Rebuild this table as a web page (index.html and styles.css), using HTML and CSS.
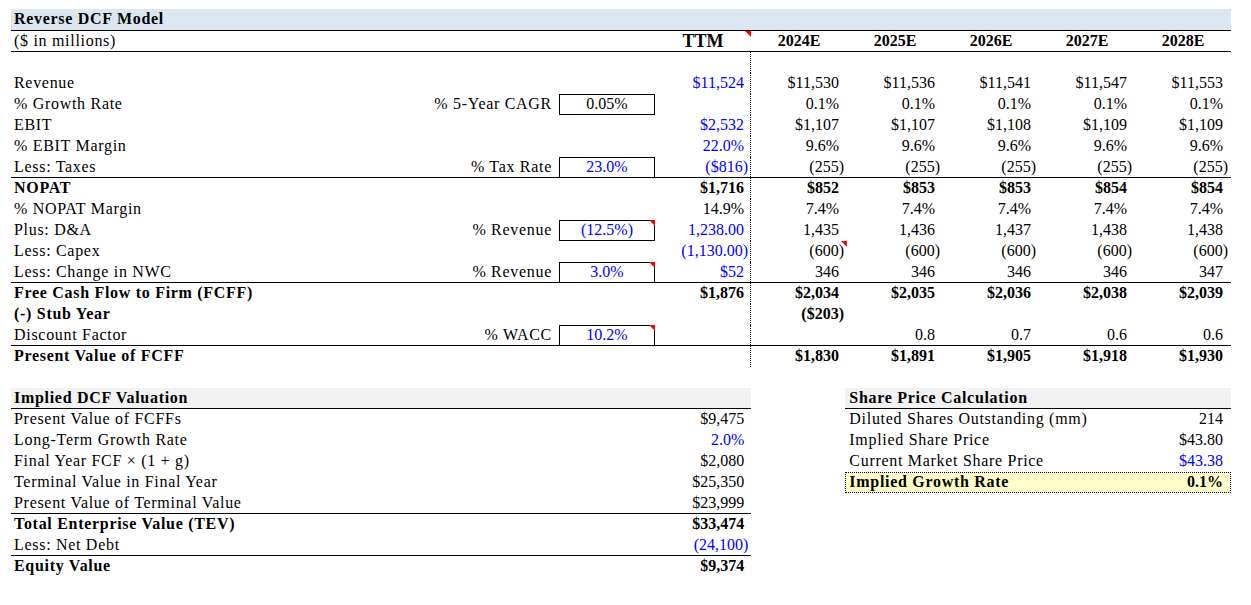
FILE: index.html
```html
<!DOCTYPE html>
<html>
<head>
<meta charset="utf-8">
<title>Reverse DCF Model</title>
<link rel="stylesheet" href="styles.css">
</head>
<body>
<div class="sheet">
  <div class="title">Reverse DCF Model</div>

  <div class="row bb">
    <div class="lbl">($ in millions)</div><div></div><div></div>
    <div class="hd ttmh">TTM<span class="tri"></span></div>
    <div class="hd">2024E</div><div class="hd">2025E</div><div class="hd">2026E</div><div class="hd">2027E</div><div class="hd">2028E</div>
  </div>

  <div class="row">
    <div class="lbl"></div><div></div><div></div><div class="ttm"></div>
    <div></div><div></div><div></div><div></div><div></div>
  </div>

  <div class="row">
    <div class="lbl">Revenue</div><div></div><div></div>
    <div class="ttm blue">$11,524</div>
    <div class="v">$11,530</div><div class="v">$11,536</div><div class="v">$11,541</div><div class="v">$11,547</div><div class="v">$11,553</div>
  </div>

  <div class="row">
    <div class="lbl">% Growth Rate</div><div class="il">% 5-Year CAGR</div><div class="inp">0.05%</div>
    <div class="ttm"></div>
    <div class="v">0.1%</div><div class="v">0.1%</div><div class="v">0.1%</div><div class="v">0.1%</div><div class="v">0.1%</div>
  </div>

  <div class="row">
    <div class="lbl">EBIT</div><div></div><div></div>
    <div class="ttm blue">$2,532</div>
    <div class="v">$1,107</div><div class="v">$1,107</div><div class="v">$1,108</div><div class="v">$1,109</div><div class="v">$1,109</div>
  </div>

  <div class="row">
    <div class="lbl">% EBIT Margin</div><div></div><div></div>
    <div class="ttm blue">22.0%</div>
    <div class="v">9.6%</div><div class="v">9.6%</div><div class="v">9.6%</div><div class="v">9.6%</div><div class="v">9.6%</div>
  </div>

  <div class="row bb">
    <div class="lbl">Less: Taxes</div><div class="il">% Tax Rate</div><div class="inp blue nobot">23.0%</div>
    <div class="ttm blue neg">($816)</div>
    <div class="v neg">(255)</div><div class="v neg">(255)</div><div class="v neg">(255)</div><div class="v neg">(255)</div><div class="v neg">(255)</div>
  </div>

  <div class="row b">
    <div class="lbl">NOPAT</div><div></div><div></div>
    <div class="ttm">$1,716</div>
    <div class="v">$852</div><div class="v">$853</div><div class="v">$853</div><div class="v">$854</div><div class="v">$854</div>
  </div>

  <div class="row">
    <div class="lbl">% NOPAT Margin</div><div></div><div></div>
    <div class="ttm">14.9%</div>
    <div class="v">7.4%</div><div class="v">7.4%</div><div class="v">7.4%</div><div class="v">7.4%</div><div class="v">7.4%</div>
  </div>

  <div class="row">
    <div class="lbl">Plus: D&amp;A</div><div class="il">% Revenue</div><div class="inp blue">(12.5%)<span class="tri"></span></div>
    <div class="ttm blue">1,238.00</div>
    <div class="v">1,435</div><div class="v">1,436</div><div class="v">1,437</div><div class="v">1,438</div><div class="v">1,438</div>
  </div>

  <div class="row">
    <div class="lbl">Less: Capex</div><div></div><div></div>
    <div class="ttm blue neg">(1,130.00)</div>
    <div class="v neg">(600)<span class="tri"></span></div><div class="v neg">(600)</div><div class="v neg">(600)</div><div class="v neg">(600)</div><div class="v neg">(600)</div>
  </div>

  <div class="row bb">
    <div class="lbl">Less: Change in NWC</div><div class="il">% Revenue</div><div class="inp blue nobot">3.0%<span class="tri"></span></div>
    <div class="ttm blue">$52</div>
    <div class="v">346</div><div class="v">346</div><div class="v">346</div><div class="v">346</div><div class="v">347</div>
  </div>

  <div class="row b">
    <div class="lbl">Free Cash Flow to Firm (FCFF)</div><div></div><div></div>
    <div class="ttm">$1,876</div>
    <div class="v">$2,034</div><div class="v">$2,035</div><div class="v">$2,036</div><div class="v">$2,038</div><div class="v">$2,039</div>
  </div>

  <div class="row b">
    <div class="lbl">(-) Stub Year</div><div></div><div></div>
    <div class="ttm"></div>
    <div class="v neg">($203)</div><div></div><div></div><div></div><div></div>
  </div>

  <div class="row bb">
    <div class="lbl">Discount Factor</div><div class="il">% WACC</div><div class="inp blue nobot">10.2%<span class="tri"></span></div>
    <div class="ttm"></div>
    <div class="v"></div><div class="v">0.8</div><div class="v">0.7</div><div class="v">0.6</div><div class="v">0.6</div>
  </div>

  <div class="row b">
    <div class="lbl">Present Value of FCFF</div><div></div><div></div>
    <div class="ttm"></div>
    <div class="v">$1,830</div><div class="v">$1,891</div><div class="v">$1,905</div><div class="v">$1,918</div><div class="v">$1,930</div>
  </div>

  <div class="bottom">
    <div class="block left">
      <div class="brow sec bb"><span class="bl">Implied DCF Valuation</span><span class="bv"></span></div>
      <div class="brow"><span class="bl">Present Value of FCFFs</span><span class="bv">$9,475</span></div>
      <div class="brow"><span class="bl">Long-Term Growth Rate</span><span class="bv blue">2.0%</span></div>
      <div class="brow"><span class="bl">Final Year FCF × (1 + g)</span><span class="bv">$2,080</span></div>
      <div class="brow"><span class="bl">Terminal Value in Final Year</span><span class="bv">$25,350</span></div>
      <div class="brow bb"><span class="bl">Present Value of Terminal Value</span><span class="bv">$23,999</span></div>
      <div class="brow b"><span class="bl">Total Enterprise Value (TEV)</span><span class="bv">$33,474</span></div>
      <div class="brow bb"><span class="bl">Less: Net Debt</span><span class="bv blue neg">(24,100)</span></div>
      <div class="brow b"><span class="bl">Equity Value</span><span class="bv">$9,374</span></div>
    </div>
    <div class="block right">
      <div class="brow sec bb"><span class="bl">Share Price Calculation</span><span class="bv"></span></div>
      <div class="brow"><span class="bl">Diluted Shares Outstanding (mm)</span><span class="bv">214</span></div>
      <div class="brow"><span class="bl">Implied Share Price</span><span class="bv">$43.80</span></div>
      <div class="brow"><span class="bl">Current Market Share Price</span><span class="bv blue">$43.38</span></div>
      <div class="brow b hl"><span class="bl">Implied Growth Rate</span><span class="bv">0.1%</span></div>
    </div>
  </div>
</div>
</body>
</html>
```

FILE: styles.css
```css
html, body {
  margin: 0;
  padding: 0;
  background: #ffffff;
}

body {
  padding: 9px 0 0 11px;
  font-family: "Liberation Serif", "Times New Roman", serif;
  font-size: 16px;
  color: #000000;
}

.sheet {
  width: 1220px;
}

.title {
  height: 22px;
  box-sizing: border-box;
  background: #dce6f1;
  border-bottom: 1px solid #000;
  font-weight: bold;
  line-height: 20px;
  padding-left: 3px;
  letter-spacing: 0.7px;
}

.row {
  display: grid;
  grid-template-columns: 409px 139px 96px 96px repeat(5, 96px);
  height: 21px;
  box-sizing: border-box;
  line-height: 20px;
  white-space: nowrap;
}

.row > div {
  position: relative;
  box-sizing: border-box;
}

.bb {
  border-bottom: 1px solid #000;
}

.b {
  font-weight: bold;
}

.blue {
  color: #0000ff;
}

.lbl {
  padding-left: 3px;
  letter-spacing: 0.7px;
}

.il {
  text-align: right;
  padding-right: 7px;
  letter-spacing: 0.7px;
}

.inp {
  border: 1px solid #000;
  text-align: center;
  line-height: 18px;
}

.inp.nobot {
  border-bottom: none;
}

.ttm {
  border-right: 1px dotted #000;
  text-align: right;
  padding-right: 6px;
}

.ttm.neg {
  padding-right: 2px;
}

.v {
  text-align: right;
  padding-right: 8px;
}

.v.neg {
  padding-right: 3px;
}

.hd {
  text-align: center;
  font-weight: bold;
}

.ttmh {
  font-size: 18px;
}

.tri {
  position: absolute;
  top: 0;
  right: 0;
  width: 0;
  height: 0;
  border-top: 6px solid #ff0000;
  border-left: 6px solid transparent;
}

.inp .tri {
  top: -1px;
  right: -1px;
}

.bottom {
  display: flex;
  margin-top: 21px;
}

.block {
  display: flex;
  flex-direction: column;
}

.left {
  width: 741px;
}

.right {
  width: 386px;
  margin-left: 94px;
}

.brow {
  display: flex;
  justify-content: space-between;
  height: 21px;
  box-sizing: border-box;
  line-height: 20px;
  white-space: nowrap;
}

.bl {
  padding-left: 3px;
  letter-spacing: 0.7px;
}

.right .bl {
  padding-left: 4px;
}

.bv {
  padding-right: 7px;
}

.bv.neg {
  padding-right: 3px;
}

.right .bv {
  padding-right: 8px;
}

.sec {
  background: #f2f2f2;
  font-weight: bold;
}

.hl {
  background: #ffffcc;
  border: 1px dotted #000;
  line-height: 18px;
}

.hl .bl {
  padding-left: 3px;
}

.hl .bv {
  padding-right: 7px;
}
```
